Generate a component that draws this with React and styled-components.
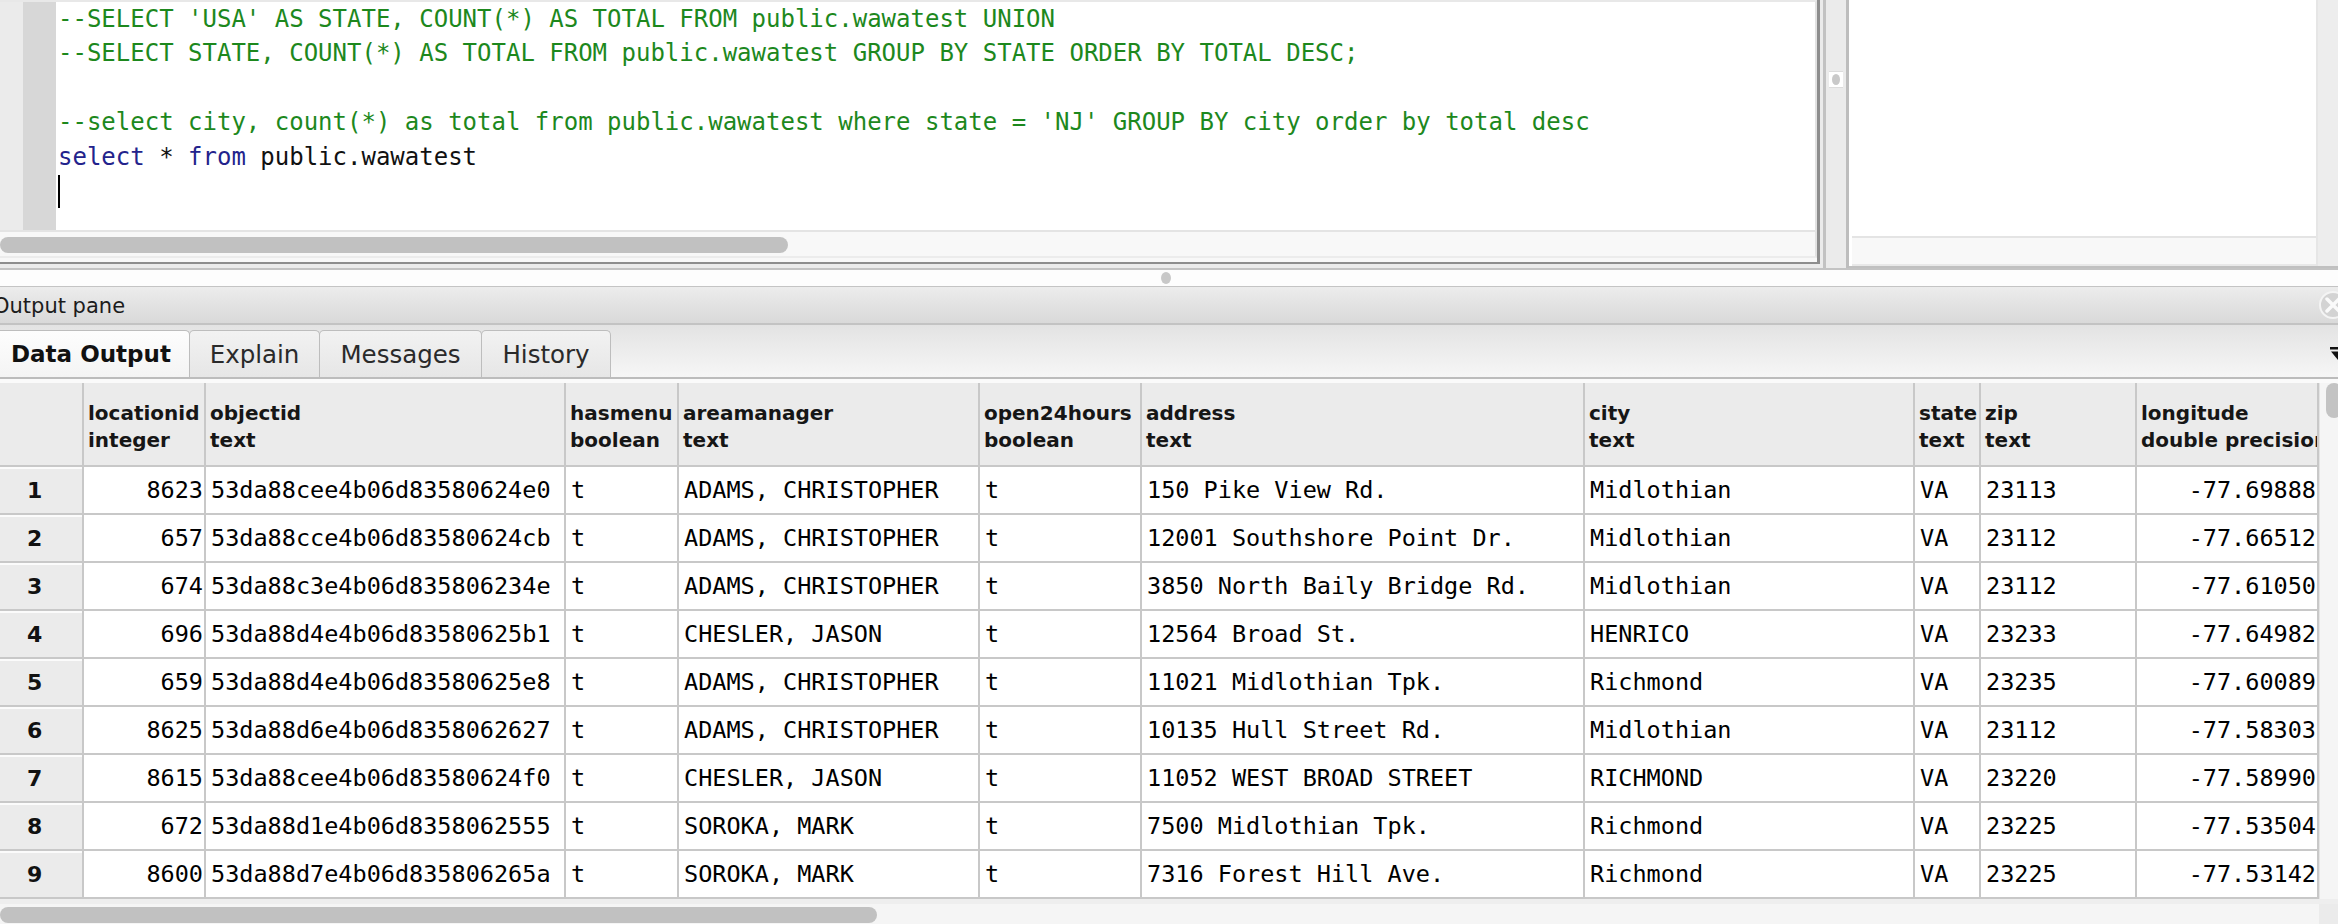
import React from "react";
import styled, { createGlobalStyle } from "styled-components";

const GlobalStyle = createGlobalStyle`
  html, body {
    margin: 0;
    padding: 0;
    overflow: hidden;
    background: #ececec;
  }
`;

const MONO = `"DejaVu Sans Mono", "Liberation Mono", monospace`;
const SANS = `"DejaVu Sans", "Liberation Sans", sans-serif`;

//Table data
const columns = [84, 122, 360, 113, 301, 162, 443, 330, 66, 156, 182];
const template = columns.map((c) => `${c}px`).join(" ");

const headers = [
  ["locationid", "integer"],
  ["objectid", "text"],
  ["hasmenu", "boolean"],
  ["areamanager", "text"],
  ["open24hours", "boolean"],
  ["address", "text"],
  ["city", "text"],
  ["state", "text"],
  ["zip", "text"],
  ["longitude", "double precision"],
];

const rightAligned = [0, 9];

const rows = [
  ["8623", "53da88cee4b06d83580624e0", "t", "ADAMS, CHRISTOPHER", "t", "150 Pike View Rd.", "Midlothian", "VA", "23113", "-77.69888"],
  ["657", "53da88cce4b06d83580624cb", "t", "ADAMS, CHRISTOPHER", "t", "12001 Southshore Point Dr.", "Midlothian", "VA", "23112", "-77.66512"],
  ["674", "53da88c3e4b06d835806234e", "t", "ADAMS, CHRISTOPHER", "t", "3850 North Baily Bridge Rd.", "Midlothian", "VA", "23112", "-77.61050"],
  ["696", "53da88d4e4b06d83580625b1", "t", "CHESLER, JASON", "t", "12564 Broad St.", "HENRICO", "VA", "23233", "-77.64982"],
  ["659", "53da88d4e4b06d83580625e8", "t", "ADAMS, CHRISTOPHER", "t", "11021 Midlothian Tpk.", "Richmond", "VA", "23235", "-77.60089"],
  ["8625", "53da88d6e4b06d8358062627", "t", "ADAMS, CHRISTOPHER", "t", "10135 Hull Street Rd.", "Midlothian", "VA", "23112", "-77.58303"],
  ["8615", "53da88cee4b06d83580624f0", "t", "CHESLER, JASON", "t", "11052 WEST BROAD STREET", "RICHMOND", "VA", "23220", "-77.58990"],
  ["672", "53da88d1e4b06d8358062555", "t", "SOROKA, MARK", "t", "7500 Midlothian Tpk.", "Richmond", "VA", "23225", "-77.53504"],
  ["8600", "53da88d7e4b06d835806265a", "t", "SOROKA, MARK", "t", "7316 Forest Hill Ave.", "Richmond", "VA", "23225", "-77.53142"],
];

const tabs = [
  { label: "Data Output", width: 190, active: true },
  { label: "Explain", width: 131 },
  { label: "Messages", width: 163 },
  { label: "History", width: 130 },
];

const App = () => {
  return (
    <Window>
      <GlobalStyle />
      <TopArea>
        <EditorFrame>
          <EditorBody>
            <FoldMargin />
            <LineMargin />
            <Code>
              <Line>
                <Comment>--SELECT 'USA' AS STATE, COUNT(*) AS TOTAL FROM public.wawatest UNION</Comment>
              </Line>
              <Line>
                <Comment>--SELECT STATE, COUNT(*) AS TOTAL FROM public.wawatest GROUP BY STATE ORDER BY TOTAL DESC;</Comment>
              </Line>
              <Line />
              <Line>
                <Comment>
                  --select city, count(*) as total from public.wawatest where state = 'NJ' GROUP BY city order by total desc
                </Comment>
              </Line>
              <Line>
                <Keyword>select</Keyword> * <Keyword>from</Keyword> public.wawatest
              </Line>
              <Line>
                <Caret />
              </Line>
            </Code>
          </EditorBody>
          <EditorScroll>
            <ScrollThumb $w={788} />
          </EditorScroll>
        </EditorFrame>
        <VSplitter>
          <SplitKnob />
        </VSplitter>
        <SidePane>
          <SideMain>
            <SideBody />
            <SideScroll />
          </SideMain>
          <SideStrip />
        </SidePane>
      </TopArea>

      <SplitBand>
        <Dot />
      </SplitBand>

      <PaneTitle>
        <TitleText>Output pane</TitleText>
        <CloseButton>
          <svg width="34" height="28" viewBox="0 0 34 28">
            <circle cx="17" cy="14" r="13" fill="#d3d3d3" stroke="#f4f4f4" strokeWidth="2" />
            <path d="M11 8 L23 20 M23 8 L11 20" stroke="#fafafa" strokeWidth="3.5" strokeLinecap="round" />
          </svg>
        </CloseButton>
      </PaneTitle>

      <TabRow>
        {tabs.map((tab) => (
          <Tab key={tab.label} $w={tab.width} $active={tab.active}>
            {tab.label}
          </Tab>
        ))}
        <TabSpacer />
        <MenuArrow>
          <svg width="16" height="14" viewBox="0 0 16 14">
            <rect x="0" y="0" width="16" height="2.5" fill="#111" />
            <path d="M1 4.5 L15 4.5 L8 13 Z" fill="#111" />
          </svg>
        </MenuArrow>
      </TabRow>

      <GridArea>
        <Viewport>
          <GridRow $header>
            <RowHead $header />
            {headers.map(([name, type]) => (
              <HeadCell key={name}>
                <span>{name}</span>
                <span>{type}</span>
              </HeadCell>
            ))}
          </GridRow>
          {rows.map((row, i) => (
            <GridRow key={i}>
              <RowHead>{i + 1}</RowHead>
              {row.map((value, j) => (
                <Cell key={j} $right={rightAligned.includes(j)}>
                  {value}
                </Cell>
              ))}
            </GridRow>
          ))}
        </Viewport>
        <VScroll>
          <VThumb />
        </VScroll>
      </GridArea>

      <BottomScroll>
        <BottomBand />
        <BottomTrack>
          <ScrollThumb $w={877} />
          <TrackFill />
          <Corner />
        </BottomTrack>
      </BottomScroll>
    </Window>
  );
};

const Window = styled.div`
  width: 2338px;
  height: 924px;
  overflow: hidden;
  display: flex;
  flex-direction: column;
  background: #ececec;
  font-family: ${SANS};
`;

/* ---------- top: editor + side pane ---------- */

const TopArea = styled.div`
  display: flex;
  height: 270px;
  flex-shrink: 0;
  border-bottom: 2px solid #c3c3c3;
  box-sizing: border-box;
  background: #ebebeb;
`;

const EditorFrame = styled.div`
  width: 1820px;
  height: 264px;
  box-sizing: border-box;
  display: flex;
  flex-direction: column;
  border-right: 3px solid #8d8d8d;
  border-bottom: 2px solid #8d8d8d;
  background: #f8f8f8;
`;

const EditorBody = styled.div`
  display: flex;
  height: 230px;
  box-sizing: border-box;
  border-top: 2px solid #e8e8e8;
  border-right: 2px solid #e2e2e2;
  background: #fff;
`;

const FoldMargin = styled.div`
  width: 23px;
  background: #ebebeb;
`;

const LineMargin = styled.div`
  width: 33px;
  background: #d7d7d7;
`;

const Code = styled.div`
  flex: 1;
  padding-left: 2px;
  font-family: ${MONO};
  font-size: 24px;
  color: #111;
  overflow: hidden;
`;

const Line = styled.div`
  height: 34.4px;
  line-height: 34.4px;
  white-space: pre;
  display: flex;
  align-items: center;
`;

const Comment = styled.span`
  color: #1d881d;
`;

const Keyword = styled.span`
  color: #23238c;
  white-space: pre;
`;

const Caret = styled.span`
  display: block;
  width: 2px;
  height: 33px;
  background: #000;
`;

const EditorScroll = styled.div`
  height: 28px;
  box-sizing: border-box;
  border-top: 2px solid #e4e4e4;
  border-bottom: 2px solid #ececec;
  border-right: 2px solid #e2e2e2;
  padding-top: 5px;
  background: #f8f8f8;
`;

const ScrollThumb = styled.div`
  width: ${(p) => p.$w}px;
  height: 16px;
  border-radius: 8px;
  background: #c1c1c1;
  flex-shrink: 0;
`;

const VSplitter = styled.div`
  width: 26px;
  height: 268px;
  box-sizing: border-box;
  border-left: 3px solid #c2c2c2;
  border-right: 3px solid #bdbdbd;
  margin-left: 3px;
  background: #ebebeb;
  display: flex;
  justify-content: center;
  padding-top: 71px;
`;

const SplitKnob = styled.div`
  width: 14px;
  height: 17px;
  box-sizing: border-box;
  background: #fff;
  border-top: 1px solid #dcdcdc;
  border-bottom: 1px solid #dcdcdc;
  display: flex;
  align-items: center;
  justify-content: center;

  &::after {
    content: "";
    width: 8px;
    height: 11px;
    border-radius: 50%;
    background: #c9c9c9;
  }
`;

const SidePane = styled.div`
  flex: 1;
  display: flex;
  height: 268px;
  box-sizing: border-box;
  padding-left: 3px;
  background: #fff;
  border-bottom: 2px solid #c0c0c0;
`;

const SideMain = styled.div`
  flex: 1;
  display: flex;
  flex-direction: column;
  border-right: 2px solid #e6e6e6;
`;

const SideBody = styled.div`
  flex: 1;
  background: #fff;
`;

const SideScroll = styled.div`
  height: 30px;
  box-sizing: border-box;
  border-top: 2px solid #e4e4e4;
  border-bottom: 2px solid #e8e8e8;
  background: #f8f8f8;
`;

const SideStrip = styled.div`
  width: 20px;
  background: #ededed;
`;

const SplitBand = styled.div`
  height: 17px;
  flex-shrink: 0;
  box-sizing: border-box;
  background: #fdfdfd;
  border-bottom: 1px solid #c4c4c4;
  display: flex;
  align-items: center;
  padding-left: 1161px;
`;

const Dot = styled.div`
  width: 10px;
  height: 12px;
  border-radius: 50%;
  background: #c8c8c8;
`;

/* ---------- output pane ---------- */

const PaneTitle = styled.div`
  height: 38px;
  flex-shrink: 0;
  box-sizing: border-box;
  display: flex;
  align-items: center;
  justify-content: space-between;
  background: linear-gradient(#ececec, #d9d9d9);
  border-bottom: 2px solid #c3c3c3;
`;

const TitleText = styled.span`
  margin-left: -7px;
  padding-top: 2px;
  font-size: 21px;
  color: #1c1c1c;
`;

const CloseButton = styled.span`
  display: flex;
  margin-right: -12px;
`;

const TabRow = styled.div`
  height: 54px;
  flex-shrink: 0;
  box-sizing: border-box;
  display: flex;
  align-items: flex-end;
  background: linear-gradient(#e3e3e3, #f6f6f6);
  border-bottom: 2px solid #bcbcbc;
`;

const Tab = styled.div`
  width: ${(p) => p.$w}px;
  height: 47px;
  box-sizing: border-box;
  display: flex;
  align-items: center;
  justify-content: ${(p) => (p.$active ? "flex-start" : "center")};
  padding-left: ${(p) => (p.$active ? "11px" : "0")};
  font-size: ${(p) => (p.$active ? "23px" : "24.5px")};
  font-weight: ${(p) => (p.$active ? 700 : 400)};
  color: ${(p) => (p.$active ? "#111" : "#2a2a2a")};
  background: ${(p) => (p.$active ? "linear-gradient(#fdfdfd, #f4f4f4)" : "linear-gradient(#f2f2f2, #e6e6e6)")};
  border: 1px solid #bdbdbd;
  border-left: ${(p) => (p.$active ? "none" : "1px solid #bdbdbd")};
  border-bottom: none;
  border-radius: ${(p) => (p.$active ? "0 5px 0 0" : "5px 5px 0 0")};
  margin-right: -1px;
`;

const TabSpacer = styled.div`
  flex: 1;
`;

const MenuArrow = styled.div`
  display: flex;
  align-self: center;
  margin-right: -8px;
  margin-top: 5px;
`;

/* ---------- grid ---------- */

const GridArea = styled.div`
  display: flex;
  flex-shrink: 0;
  height: 520px;
  box-sizing: border-box;
  padding-top: 4px;
  background: #fafafa;
`;

const Viewport = styled.div`
  width: 2319px;
  overflow: hidden;
  background: #fff;
`;

const GridRow = styled.div`
  display: grid;
  grid-template-columns: ${template};
  height: ${(p) => (p.$header ? 84 : 48)}px;
`;

const BaseCell = styled.div`
  box-sizing: border-box;
  border-right: 2px solid #c8c8c8;
  border-bottom: 2px solid #c8c8c8;
  overflow: hidden;
  white-space: nowrap;
`;

const RowHead = styled(BaseCell)`
  background: #ebebeb;
  box-shadow: ${(p) => (p.$header ? "none" : "inset 0 2px 0 #fbfbfb")};
  display: flex;
  align-items: center;
  padding-left: 27px;
  font-size: 22px;
  font-weight: 700;
  color: #111;
`;

const HeadCell = styled(BaseCell)`
  background: #ebebeb;
  display: flex;
  flex-direction: column;
  justify-content: center;
  padding: 5px 0 0 4px;
  font-size: 20px;
  font-weight: 700;
  line-height: 27px;
  color: #161616;
`;

const Cell = styled(BaseCell)`
  display: flex;
  align-items: center;
  justify-content: ${(p) => (p.$right ? "flex-end" : "flex-start")};
  padding: ${(p) => (p.$right ? "0 1px 0 0" : "0 0 0 5px")};
  font-family: ${MONO};
  font-size: 23.5px;
  color: #000;
`;

const VScroll = styled.div`
  flex: 1;
  box-sizing: border-box;
  background: #f5f5f5;
  border-left: 1px solid #e4e4e4;
  padding-left: 6px;
  overflow: hidden;
`;

const VThumb = styled.div`
  width: 16px;
  height: 35px;
  border-radius: 8px;
  background: #c3c3c3;
`;

const BottomScroll = styled.div`
  flex: 1;
  display: flex;
  flex-direction: column;
`;

const BottomBand = styled.div`
  height: 5px;
  background: #eeeeee;
`;

const BottomTrack = styled.div`
  flex: 1;
  display: flex;
  background: #f5f5f5;
  padding-top: 3px;
`;

const TrackFill = styled.div`
  flex: 1;
`;

const Corner = styled.div`
  width: 19px;
  margin-top: -3px;
  background: #ebebeb;
`;

export default App;
